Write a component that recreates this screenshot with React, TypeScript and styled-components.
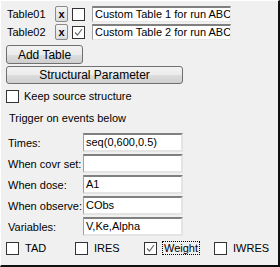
import React from "react";
import styled, { createGlobalStyle } from "styled-components";

const Global = createGlobalStyle`
  html, body { margin: 0; padding: 0; background: #f0f0f0; }
  * { box-sizing: border-box; }
`;

const Frame = styled.div`
  width: 280px;
  height: 267px;
  background: #f0f0f0;
  border-top: 1px solid #ffffff;
  border-left: 1px solid #ffffff;
  border-right: 2px solid #101010;
  border-bottom: 2px solid #101010;
  font-family: "Liberation Sans", Arial, sans-serif;
  font-size: 11px;
  color: #000;
  padding: 4px 0 0 4px;
  display: flex;
  flex-direction: column;
  overflow: hidden;
`;

const TableRow = styled.div<{ $mt: number }>`
  display: flex;
  align-items: center;
  height: 16px;
  margin-top: ${(p) => p.$mt}px;
`;

const TableLabel = styled.span`
  width: 50px;
  padding-left: 2px;
`;

const XButton = styled.div`
  width: 13px;
  height: 16px;
  border: 1px solid #8a8a8a;
  border-radius: 2px;
  background: linear-gradient(#f4f4f4, #dcdcdc);
  font-weight: bold;
  font-size: 11px;
  display: flex;
  align-items: flex-end;
  justify-content: center;
  line-height: 11px;
  padding-bottom: 1px;
  margin-right: 4px;
`;

const Check = styled.div`
  width: 13px;
  height: 13px;
  background: #fff;
  border: 1px solid #333;
  flex: none;
  display: flex;
  align-items: center;
  justify-content: center;
`;

const TableBox = styled.div`
  margin-left: 7px;
  width: 139px;
  height: 16px;
  background: #fff;
  border-top: 2px solid #808080;
  border-left: 1px solid #a0a0a0;
  border-right: 1px solid #e8e8e8;
  border-bottom: 1px solid #e8e8e8;
  padding-left: 2px;
  line-height: 13px;
  white-space: nowrap;
  overflow: hidden;
`;

const Button = styled.div<{ $w: number; $h: number; $mt: number }>`
  width: ${(p) => p.$w}px;
  height: ${(p) => p.$h}px;
  margin-top: ${(p) => p.$mt}px;
  margin-left: 1px;
  border: 1px solid #707070;
  border-radius: 3px;
  background: linear-gradient(#f2f2f2 0%, #ebebeb 50%, #dddddd 51%, #cfcfcf 100%);
  display: flex;
  align-items: center;
  justify-content: center;
  font-size: 12px;
`;

const CheckRow = styled.label<{ $mt: number }>`
  display: flex;
  align-items: center;
  gap: 5px;
  margin-top: ${(p) => p.$mt}px;
  margin-left: 1px;
  height: 14px;
`;

const Note = styled.div`
  margin-top: 8px;
  margin-left: 4px;
  height: 14px;
  line-height: 14px;
`;

const Fields = styled.div`
  display: flex;
  flex-direction: column;
  gap: 2px;
  margin-top: 8px;
`;

const FieldRow = styled.div`
  display: flex;
  align-items: center;
  height: 19px;
`;

const FieldLabel = styled.span`
  width: 78px;
  padding-left: 3px;
`;

const FieldBox = styled.div`
  width: 100px;
  height: 19px;
  background: #fff;
  border-top: 2px solid #808080;
  border-left: 1px solid #a0a0a0;
  border-right: 2px solid #e4e4e4;
  border-bottom: 2px solid #e4e4e4;
  padding-left: 2px;
  line-height: 15px;
  white-space: nowrap;
  overflow: hidden;
`;

const OptRow = styled.div`
  display: flex;
  align-items: center;
  margin-top: 4px;
  margin-left: 1px;
  height: 16px;
`;

const Opt = styled.div<{ $w: number }>`
  display: flex;
  align-items: center;
  gap: 6px;
  width: ${(p) => p.$w}px;
`;

const Focus = styled.span`
  outline: 1px dotted #000;
  padding: 0 1px;
`;

const Tick = () => (
  <svg width="11" height="11" viewBox="0 0 11 11">
    <path d="M2 5.5 L4.5 8 L9 2" fill="none" stroke="#6b6b6b" strokeWidth="1.2" />
  </svg>
);

export default function App() {
  return (
    <>
      <Global />
      <Frame>
        <TableRow $mt={1}>
          <TableLabel>Table01</TableLabel>
          <XButton>x</XButton>
          <Check />
          <TableBox>Custom Table 1 for run ABC</TableBox>
        </TableRow>
        <TableRow $mt={2}>
          <TableLabel>Table02</TableLabel>
          <XButton>x</XButton>
          <Check>
            <Tick />
          </Check>
          <TableBox>Custom Table 2 for run ABC</TableBox>
        </TableRow>
        <Button $w={77} $h={19} $mt={5}>Add Table</Button>
        <Button $w={177} $h={18} $mt={2}>Structural Parameter</Button>
        <CheckRow $mt={5}>
          <Check />
          <span>Keep source structure</span>
        </CheckRow>
        <Note>Trigger on events below</Note>
        <Fields>
          <FieldRow>
            <FieldLabel>Times:</FieldLabel>
            <FieldBox>seq(0,600,0.5)</FieldBox>
          </FieldRow>
          <FieldRow>
            <FieldLabel>When covr set:</FieldLabel>
            <FieldBox />
          </FieldRow>
          <FieldRow>
            <FieldLabel>When dose:</FieldLabel>
            <FieldBox>A1</FieldBox>
          </FieldRow>
          <FieldRow>
            <FieldLabel>When observe:</FieldLabel>
            <FieldBox>CObs</FieldBox>
          </FieldRow>
          <FieldRow>
            <FieldLabel>Variables:</FieldLabel>
            <FieldBox>V,Ke,Alpha</FieldBox>
          </FieldRow>
        </Fields>
        <OptRow>
          <Opt $w={69}>
            <Check />
            <span>TAD</span>
          </Opt>
          <Opt $w={69}>
            <Check />
            <span>IRES</span>
          </Opt>
          <Opt $w={70}>
            <Check>
              <Tick />
            </Check>
            <Focus>Weight</Focus>
          </Opt>
          <Opt $w={60}>
            <Check />
            <span>IWRES</span>
          </Opt>
        </OptRow>
      </Frame>
    </>
  );
}
